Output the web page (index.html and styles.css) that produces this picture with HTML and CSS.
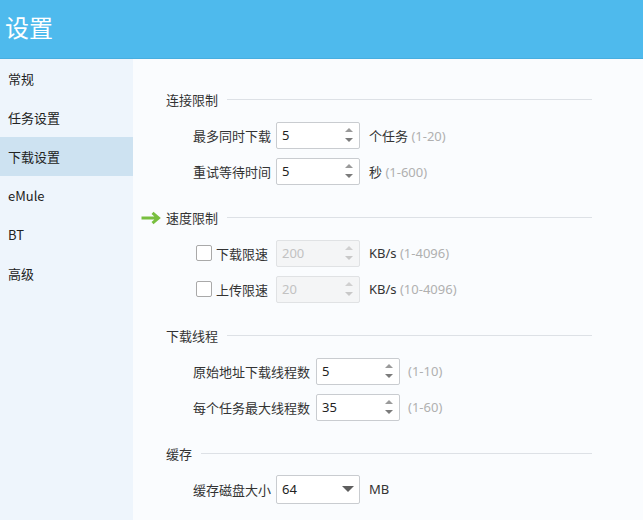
FILE: index.html
```html
<!DOCTYPE html>
<html lang="zh-CN">
<head>
<meta charset="utf-8">
<title>设置</title>
<link rel="stylesheet" href="styles.css">
</head>
<body>
<div class="app">
  <header class="titlebar"><h1 class="title">设置</h1></header>
  <div class="main">
    <nav class="sidebar">
      <div class="nav-item">常规</div>
      <div class="nav-item">任务设置</div>
      <div class="nav-item active">下载设置</div>
      <div class="nav-item">eMule</div>
      <div class="nav-item">BT</div>
      <div class="nav-item">高级</div>
    </nav>
    <main class="content">
      <section class="group">
        <div class="group-head"><span class="group-title">连接限制</span></div>
        <div class="row">
          <span class="lbl w78">最多同时下载</span>
          <div class="spin"><span class="val">5</span><span class="arrows"><i class="up"></i><i class="down"></i></span></div>
          <span class="unit">个任务 <span class="range">(1-20)</span></span>
        </div>
        <div class="row">
          <span class="lbl w78">重试等待时间</span>
          <div class="spin"><span class="val">5</span><span class="arrows"><i class="up"></i><i class="down"></i></span></div>
          <span class="unit">秒 <span class="range">(1-600)</span></span>
        </div>
      </section>

      <section class="group">
        <div class="group-head">
          <svg class="mark" width="22" height="14" viewBox="0 0 22 14"><path d="M1.5 7 H18 M12.5 1.8 L18.5 7 L12.5 12.2" fill="none" stroke="#78bf3f" stroke-width="3" stroke-linejoin="miter"/></svg>
          <span class="group-title">速度限制</span>
        </div>
        <div class="row">
          <span class="lbl w78 check-lbl"><span class="box"></span>下载限速</span>
          <div class="spin disabled"><span class="val">200</span><span class="arrows"><i class="up"></i><i class="down"></i></span></div>
          <span class="unit">KB/s <span class="range">(1-4096)</span></span>
        </div>
        <div class="row">
          <span class="lbl w78 check-lbl"><span class="box"></span>上传限速</span>
          <div class="spin disabled"><span class="val">20</span><span class="arrows"><i class="up"></i><i class="down"></i></span></div>
          <span class="unit">KB/s <span class="range">(10-4096)</span></span>
        </div>
      </section>

      <section class="group">
        <div class="group-head"><span class="group-title">下载线程</span></div>
        <div class="row">
          <span class="lbl w118">原始地址下载线程数</span>
          <div class="spin"><span class="val">5</span><span class="arrows"><i class="up"></i><i class="down"></i></span></div>
          <span class="unit tight"><span class="range">(1-10)</span></span>
        </div>
        <div class="row">
          <span class="lbl w118">每个任务最大线程数</span>
          <div class="spin"><span class="val">35</span><span class="arrows"><i class="up"></i><i class="down"></i></span></div>
          <span class="unit tight"><span class="range">(1-60)</span></span>
        </div>
      </section>

      <section class="group">
        <div class="group-head"><span class="group-title">缓存</span></div>
        <div class="row">
          <span class="lbl w78">缓存磁盘大小</span>
          <div class="spin select"><span class="val">64</span><span class="caret"></span></div>
          <span class="unit">MB</span>
        </div>
      </section>
    </main>
  </div>
</div>
</body>
</html>
```

FILE: styles.css
```css
* { box-sizing: border-box; }
html, body { margin: 0; padding: 0; }
body {
  width: 643px;
  height: 520px;
  overflow: hidden;
  font-family: "Noto Sans", "Noto Sans CJK SC", sans-serif;
  font-size: 13px;
  color: #333;
  background: #fafcfe;
}
.app { display: flex; flex-direction: column; height: 520px; }
.titlebar {
  height: 59px;
  background: #4ebaed;
  border-bottom: 1px solid #47aee0;
  display: flex;
  align-items: center;
  padding-left: 5px;
}
.title {
  margin: 0;
  font-family: "Noto Sans CJK SC", sans-serif;
  font-size: 24px;
  font-weight: 400;
  color: #fff;
  line-height: 30px;
  margin-top: -4px;
}
.main { flex: 1; display: flex; }
.sidebar {
  width: 133px;
  background: #eef5fc;
  display: flex;
  flex-direction: column;
}
.nav-item {
  height: 39px;
  line-height: 39px;
  padding-left: 8px;
  font-family: "Noto Sans CJK SC", sans-serif;
  font-size: 13px;
  color: #222;
}
.nav-item.active { background: #cde2f1; }
.content {
  flex: 1;
  padding: 31px 51px 0 33px;
  display: flex;
  flex-direction: column;
  gap: 19px;
}
.group { display: flex; flex-direction: column; }
.group-head {
  position: relative;
  height: 20px;
  display: flex;
  align-items: center;
  margin-bottom: 7px;
}
.group-head::after {
  content: "";
  flex: 1;
  height: 1px;
  background: #dde1e6;
  margin-left: 9px;
  margin-top: -2px;
}
.group-title {
  font-family: "Noto Sans CJK SC", sans-serif;
  font-size: 13px;
  color: #333;
  line-height: 20px;
}
.mark { position: absolute; left: -26px; top: 3px; }
.row {
  height: 36px;
  display: flex;
  align-items: center;
  padding-left: 27px;
}
.lbl {
  font-family: "Noto Sans CJK SC", sans-serif;
  color: #333;
  white-space: nowrap;
  margin-right: 5px;
}
.w78 { width: 78px; }
.w118 { width: 118px; }
.check-lbl { display: flex; align-items: center; padding-left: 3px; }
.box {
  width: 16px;
  height: 16px;
  border: 1px solid #a9a9a9;
  border-radius: 2px;
  background: #fff;
  margin-right: 4px;
}
.spin {
  width: 84px;
  height: 27px;
  border: 1px solid #c9ccd0;
  border-radius: 2px;
  background: #fff;
  display: flex;
  align-items: center;
  padding-left: 5px;
}
.val { flex: 1; font-size: 13px; color: #222; }
.arrows {
  width: 20px;
  display: flex;
  flex-direction: column;
  align-items: center;
  gap: 6px;
}
.arrows i { width: 0; height: 0; border-left: 4px solid transparent; border-right: 4px solid transparent; }
.arrows .up { border-bottom: 4px solid #9a9a9a; }
.arrows .down { border-top: 4px solid #7b7b7b; }
.spin.disabled { background: #f4f5f6; border-color: #e0e2e4; }
.spin.disabled .val { color: #c2c2c2; }
.spin.disabled .arrows .up { border-bottom-color: #d0d0d0; }
.spin.disabled .arrows .down { border-top-color: #c8c8c8; }
.spin.select { height: 29px; }
.caret {
  width: 0; height: 0;
  border-left: 6px solid transparent;
  border-right: 6px solid transparent;
  border-top: 6px solid #5e5e5e;
  margin-right: 5px;
}
.unit {
  margin-left: 9px;
  font-family: "Noto Sans", "Noto Sans CJK SC", sans-serif;
  color: #333;
  white-space: nowrap;
}
.unit.tight { margin-left: 8px; }
.range { color: #b0b0b0; }
```
